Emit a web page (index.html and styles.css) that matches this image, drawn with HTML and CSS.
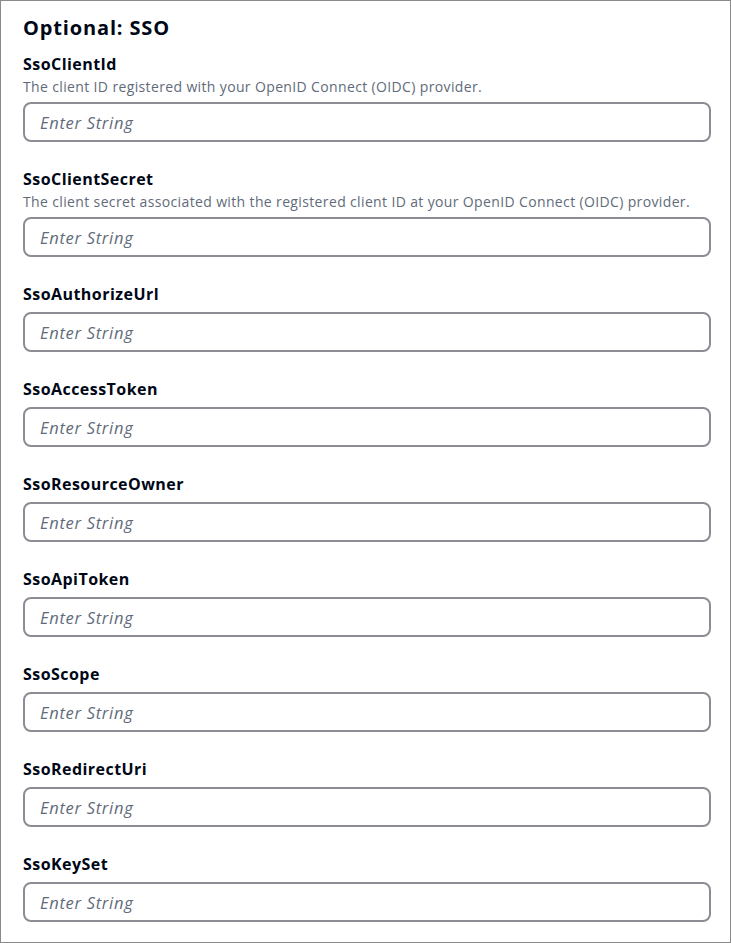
FILE: index.html
```html
<!DOCTYPE html>
<html>
<head>
<meta charset="utf-8">
<link rel="stylesheet" href="styles.css">
</head>
<body>
<div class="panel">
  <h2 class="title">Optional: SSO</h2>
  <div class="field">
    <label class="label">SsoClientId</label>
    <div class="desc">The client ID registered with your OpenID Connect (OIDC) provider.</div>
    <input class="input" type="text" placeholder="Enter String">
  </div>
  <div class="field">
    <label class="label">SsoClientSecret</label>
    <div class="desc">The client secret associated with the registered client ID at your OpenID Connect (OIDC) provider.</div>
    <input class="input" type="text" placeholder="Enter String">
  </div>
  <div class="field">
    <label class="label">SsoAuthorizeUrl</label>
    <input class="input" type="text" placeholder="Enter String">
  </div>
  <div class="field">
    <label class="label">SsoAccessToken</label>
    <input class="input" type="text" placeholder="Enter String">
  </div>
  <div class="field">
    <label class="label">SsoResourceOwner</label>
    <input class="input" type="text" placeholder="Enter String">
  </div>
  <div class="field">
    <label class="label">SsoApiToken</label>
    <input class="input" type="text" placeholder="Enter String">
  </div>
  <div class="field">
    <label class="label">SsoScope</label>
    <input class="input" type="text" placeholder="Enter String">
  </div>
  <div class="field">
    <label class="label">SsoRedirectUri</label>
    <input class="input" type="text" placeholder="Enter String">
  </div>
  <div class="field">
    <label class="label">SsoKeySet</label>
    <input class="input" type="text" placeholder="Enter String">
  </div>
</div>
</body>
</html>
```
FILE: styles.css
```css
html, body {
  margin: 0;
  padding: 0;
  background: #fff;
}
body {
  font-family: "Open Sans", "Noto Sans", sans-serif;
  color: #000716;
}
.panel {
  box-sizing: border-box;
  width: 731px;
  height: 943px;
  border: 1px solid #8a8a8a;
  padding: 13px 20px 0 22px;
  display: flex;
  flex-direction: column;
}
.title {
  margin: 0 0 11px 0;
  font-size: 20px;
  line-height: 28px;
  font-weight: 700;
  letter-spacing: 0.85px;
}
.field {
  display: flex;
  flex-direction: column;
  margin-bottom: 26px;
}
.label {
  font-size: 16px;
  line-height: 22px;
  font-weight: 700;
  letter-spacing: 0.45px;
}
.desc {
  margin-top: 2px;
  font-size: 14px;
  line-height: 20px;
  letter-spacing: 0.36px;
  color: #5f6b7a;
}
.input {
  box-sizing: border-box;
  width: 688px;
  height: 40px;
  margin-top: 5px;
  border: 2px solid #8c8c94;
  border-radius: 8px;
  padding: 0 15px;
  font-family: inherit;
  font-size: 16.5px;
  letter-spacing: 0.7px;
  outline: none;
  background: #fff;
}
.label + .input {
  margin-top: 7px;
}
.input::placeholder {
  color: #5f6b7a;
  font-style: italic;
  opacity: 1;
}
```
